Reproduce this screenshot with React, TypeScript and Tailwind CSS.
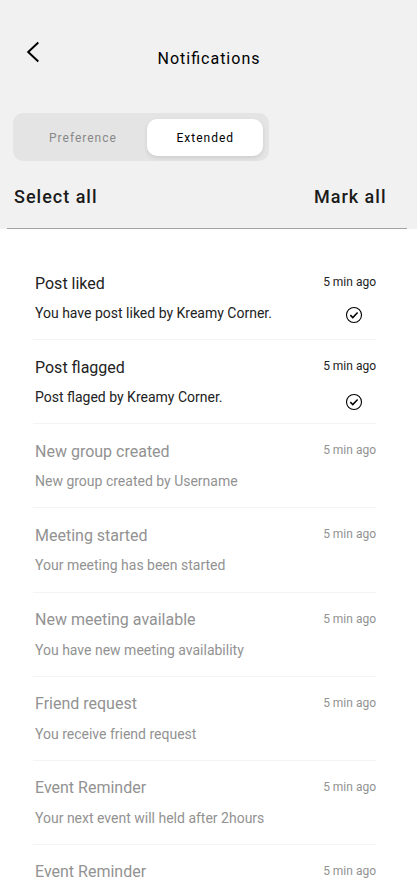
import React from "react";

const items = [
  { title: "Post liked", text: "You have post liked by Kreamy Corner.", active: true },
  { title: "Post flagged", text: "Post flaged by Kreamy Corner.", active: true },
  { title: "New group created", text: "New group created by Username" },
  { title: "Meeting started", text: "Your meeting has been started" },
  { title: "New meeting available", text: "You have new meeting availability" },
  { title: "Friend request", text: "You receive friend request" },
  { title: "Event Reminder", text: "Your next event will held after 2hours" },
  { title: "Event Reminder", text: "", active: false },
];

function Check({ low }: { low: boolean }) {
  return (
    <svg className={`mr-[13px] size-[18px] ${low ? "mt-[19px]" : "mt-[16px]"}`} viewBox="0 0 18 18" fill="none" stroke="#000">
      <circle cx="9" cy="9" r="7.5" strokeWidth="1.1" />
      <path d="M5.3 9.1l2.5 2.5 4.8-5" strokeWidth="1.5" />
    </svg>
  );
}

export default function App() {
  return (
    <div className="h-[895px] w-[417px] overflow-hidden bg-white font-[Roboto,sans-serif] text-black">
      <header className="h-[229px] bg-[#f1f1f1]">
        <div className="flex h-[113px] items-start">
          <svg className="mt-[41px] ml-[26px] h-[22px] w-[14px]" viewBox="0 0 14 22" fill="none" stroke="#000" strokeWidth="2">
            <path d="M12.3 1.5L2.2 11l10.1 9.5" />
          </svg>
          <h1 className="mt-[47px] ml-[117.5px] text-base leading-6 tracking-[1px]">
            Noti<span className="mr-[1px] tracking-normal">fi</span>cations
          </h1>
        </div>
        <div className="ml-[13px] flex h-12 w-[256px] items-center rounded-[10px] bg-[#e4e4e4] text-xs tracking-[1px]">
          <span className="w-[134px] pt-0.5 pl-9 text-[#888]">Preference</span>
          <span className="flex h-[37px] w-[115.5px] items-center justify-center rounded-[10px] bg-white pt-[2px] pl-[1px] shadow-[0_2px_4px_rgba(0,0,0,0.1)]">Extended</span>
        </div>
        <div className="mr-[10px] ml-[7px] flex h-[68px] justify-between border-b border-[#a3a3a3] pt-6 pr-[20.5px] pl-[7px] text-lg leading-6 font-medium tracking-[1px] text-[#1b1b1b]">
          <span>Select all</span>
          <span>Mark all</span>
        </div>
      </header>
      <main className="pt-[27px] pr-[41px] pl-[33px]">
        {items.map((item, i) => (
          <div key={i} className={`flex h-[84.15px] justify-between border-b border-[#f4f4f4] pt-[15.5px] pl-[2px] ${item.active ? "text-[#222]" : "text-[#929292]"}`}>
            <div>
              <h2 className="text-base leading-6">{item.title}</h2>
              <p className="mt-[7.5px] text-sm leading-5">{item.text}</p>
            </div>
            <div className="flex flex-col items-end">
              <span className="mt-[2.5px] text-xs leading-4">5 min ago</span>
              {item.active && <Check low={i === 1} />}
            </div>
          </div>
        ))}
      </main>
    </div>
  );
}
